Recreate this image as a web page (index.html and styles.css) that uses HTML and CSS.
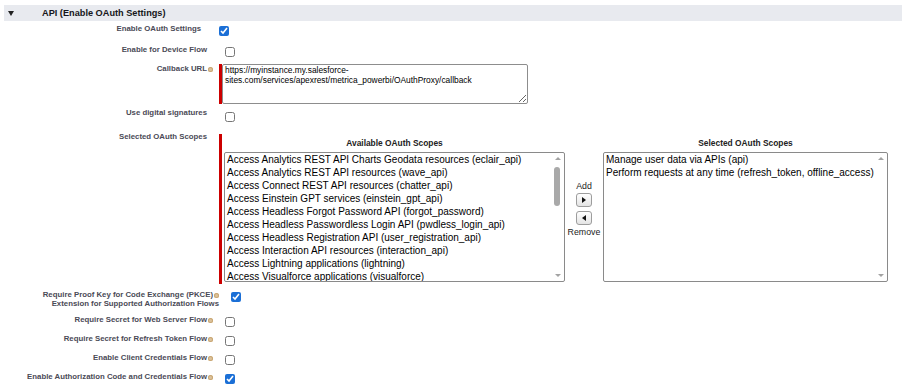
FILE: index.html
```html
<!DOCTYPE html>
<html lang="en">
<head>
  <meta charset="UTF-8">
  <meta name="viewport" content="width=device-width, initial-scale=1.0">
  <title>API (Enable OAuth Settings)</title>
  <link rel="stylesheet" href="styles.css">
</head>
<body>
  <!-- section header -->
  <div class="section-head">
    <span class="twisty"></span>
    <h3>API (Enable OAuth Settings)</h3>
  </div>

  <div class="form">
    <div class="row row-top">
      <label class="label lbl-short">Enable OAuth Settings</label>
      <div class="data"><input type="checkbox" class="cb cb-flush" checked></div>
    </div>
    <div class="row row-top">
      <label class="label">Enable for Device Flow</label>
      <div class="data"><input type="checkbox" class="cb"></div>
    </div>

    <div class="row row-url">
      <label class="label">Callback URL<span class="help"></span></label>
      <div class="data">
        <div class="required">
          <textarea class="url" spellcheck="false">https://myinstance.my.salesforce-sites.com/services/apexrest/metrica_powerbi/OAuthProxy/callback</textarea>
        </div>
      </div>
    </div>

    <div class="row row-sig">
      <label class="label">Use digital signatures</label>
      <div class="data"><input type="checkbox" class="cb"></div>
    </div>

    <div class="row row-scopes">
      <label class="label">Selected OAuth Scopes</label>
      <div class="data">
        <div class="required picker">
          <div class="pick-col avail">
            <div class="pick-title">Available OAuth Scopes</div>
            <div class="listbox">
              <div class="items">
                <div>Access Analytics REST API Charts Geodata resources (eclair_api)</div>
                <div>Access Analytics REST API resources (wave_api)</div>
                <div>Access Connect REST API resources (chatter_api)</div>
                <div>Access Einstein GPT services (einstein_gpt_api)</div>
                <div>Access Headless Forgot Password API (forgot_password)</div>
                <div>Access Headless Passwordless Login API (pwdless_login_api)</div>
                <div>Access Headless Registration API (user_registration_api)</div>
                <div>Access Interaction API resources (interaction_api)</div>
                <div>Access Lightning applications (lightning)</div>
                <div>Access Visualforce applications (visualforce)</div>
              </div>
              <div class="scrollbar">
                <span class="arrow up"></span>
                <span class="thumb"></span>
                <span class="arrow down"></span>
              </div>
            </div>
          </div>

          <div class="mover">
            <span>Add</span>
            <button class="move-btn"><span class="tri right"></span></button>
            <button class="move-btn"><span class="tri left"></span></button>
            <span>Remove</span>
          </div>

          <div class="pick-col chosen">
            <div class="pick-title">Selected OAuth Scopes</div>
            <div class="listbox">
              <div class="items">
                <div>Manage user data via APIs (api)</div>
                <div>Perform requests at any time (refresh_token, offline_access)</div>
              </div>
              <div class="scrollbar">
                <span class="arrow up"></span>
                <span class="arrow down"></span>
              </div>
            </div>
          </div>
        </div>
      </div>
    </div>

    <div class="row row-pkce">
      <label class="label lbl-wide">Require Proof Key for Code Exchange (PKCE)<span class="help"></span><br>Extension for Supported Authorization Flows</label>
      <div class="data"><input type="checkbox" class="cb" checked></div>
    </div>
    <div class="row row-low">
      <label class="label">Require Secret for Web Server Flow<span class="help"></span></label>
      <div class="data"><input type="checkbox" class="cb"></div>
    </div>
    <div class="row row-low">
      <label class="label">Require Secret for Refresh Token Flow<span class="help"></span></label>
      <div class="data"><input type="checkbox" class="cb"></div>
    </div>
    <div class="row row-low">
      <label class="label">Enable Client Credentials Flow<span class="help"></span></label>
      <div class="data"><input type="checkbox" class="cb"></div>
    </div>
    <div class="row row-low">
      <label class="label">Enable Authorization Code and Credentials Flow<span class="help"></span></label>
      <div class="data"><input type="checkbox" class="cb" checked></div>
    </div>
  </div>
</body>
</html>
```

FILE: styles.css
```css
body {
  margin: 0;
  background: #fff;
  font-family: "Liberation Sans", Arial, sans-serif;
  color: #000;
}

/* section header bar */
.section-head {
  display: flex;
  align-items: center;
  height: 16px;
  margin: 5px 2px 0 4px;
  background: #e8eaef;
}

.twisty {
  width: 0;
  height: 0;
  margin-left: 4px;
  border-left: 3px solid transparent;
  border-right: 3px solid transparent;
  border-top: 5px solid #222;
}

.section-head h3 {
  margin: 0 0 0 28px;
  font-size: 9.2px;
  font-weight: bold;
  color: #16161a;
}

/* form rows */
.row {
  display: flex;
  align-items: flex-start;
}

.label {
  width: 213px;
  flex-shrink: 0;
  box-sizing: border-box;
  padding-right: 6px;
  text-align: right;
  font-size: 7.8px;
  font-weight: bold;
  line-height: 10px;
  color: #4a4a56;
}

.label .help {
  display: inline-block;
  width: 5px;
  height: 5px;
  margin-left: 1px;
  border-radius: 50%;
  background: #dcc29c;
  box-shadow: inset 0 0 0 1px #c9a774;
  vertical-align: -0.5px;
}

.row .label:has(.help) {
  padding-right: 0;
}

.lbl-short {
  padding-right: 12px;
}

.lbl-wide {
  width: 219px;
  line-height: 9px;
}

.data {
  padding-left: 6px;
}

.cb {
  display: block;
  width: 10px;
  height: 10px;
  margin: 0 0 0 6px;
  accent-color: #1b6fd6;
}

.cb-flush {
  margin-left: 0;
}

.row-top {
  height: 21px;
}
.row-top .label { padding-top: 3px; }
.row-top .data { padding-top: 5px; }

.row-url {
  height: 44px;
}
.row-url .label { padding-top: 1px; }
.row-url .data { padding-top: 1px; }

.row-sig {
  height: 25px;
}
.row-sig .label { padding-top: 1px; }
.row-sig .data { padding-top: 5px; }

.row-scopes {
  height: 156px;
}
.row-scopes .data { padding-top: 2px; }

.row-pkce {
  height: 24px;
}
.row-pkce .label { padding-top: 2px; }
.row-pkce .data { padding-top: 4px; }

.row-low {
  height: 19px;
}
.row-low .label { padding-top: 3px; }
.row-low .data { padding-top: 5px; }

/* red required marker */
.required {
  border-left: 3px solid #c00;
}

.url {
  display: block;
  width: 306px;
  height: 40px;
  box-sizing: border-box;
  margin: 0;
  padding: 1px 2px;
  border: 1px solid #8d8d8d;
  border-radius: 2px;
  font-family: "Liberation Sans", Arial, sans-serif;
  font-size: 8.4px;
  line-height: 9.5px;
  color: #000;
  resize: both;
}

/* dueling picklist */
.picker {
  display: flex;
  height: 150px;
  padding-left: 2px;
}

.pick-title {
  height: 18px;
  line-height: 18px;
  text-align: center;
  font-size: 8.4px;
  font-weight: bold;
  color: #222;
}

.avail {
  width: 341px;
}

.chosen {
  width: 285px;
}

.listbox {
  display: flex;
  height: 130px;
  box-sizing: border-box;
  border: 1px solid #8a8a8a;
  border-radius: 2px;
  background: #fff;
}

.items {
  flex: 1;
  padding: 0 0 0 2px;
  font-size: 10px;
  line-height: 13px;
  white-space: nowrap;
  overflow: hidden;
}

.scrollbar {
  position: relative;
  width: 11px;
  flex-shrink: 0;
}

.arrow {
  position: absolute;
  left: 2px;
  width: 0;
  height: 0;
  border-left: 3px solid transparent;
  border-right: 3px solid transparent;
}

.arrow.up {
  top: 4px;
  border-bottom: 3px solid #a3a3a3;
}

.arrow.down {
  bottom: 4px;
  border-top: 3px solid #a3a3a3;
}

.thumb {
  position: absolute;
  top: 14px;
  left: 1px;
  width: 6px;
  height: 39px;
  border-radius: 3px;
  background: #a9a9a9;
}

.mover {
  width: 38px;
  display: flex;
  flex-direction: column;
  align-items: center;
  padding-top: 47px;
  font-size: 8.8px;
  line-height: 10px;
  color: #222;
}

.move-btn {
  display: flex;
  align-items: center;
  justify-content: center;
  width: 16px;
  height: 14px;
  margin: 2px 0 2px;
  padding: 0;
  border: 1px solid #9d9d9d;
  border-radius: 3px;
  background: linear-gradient(#ffffff, #e4e4e4);
}

.tri {
  width: 0;
  height: 0;
  border-top: 3px solid transparent;
  border-bottom: 3px solid transparent;
}

.tri.right {
  border-left: 4px solid #111;
}

.tri.left {
  border-right: 4px solid #111;
}
```
